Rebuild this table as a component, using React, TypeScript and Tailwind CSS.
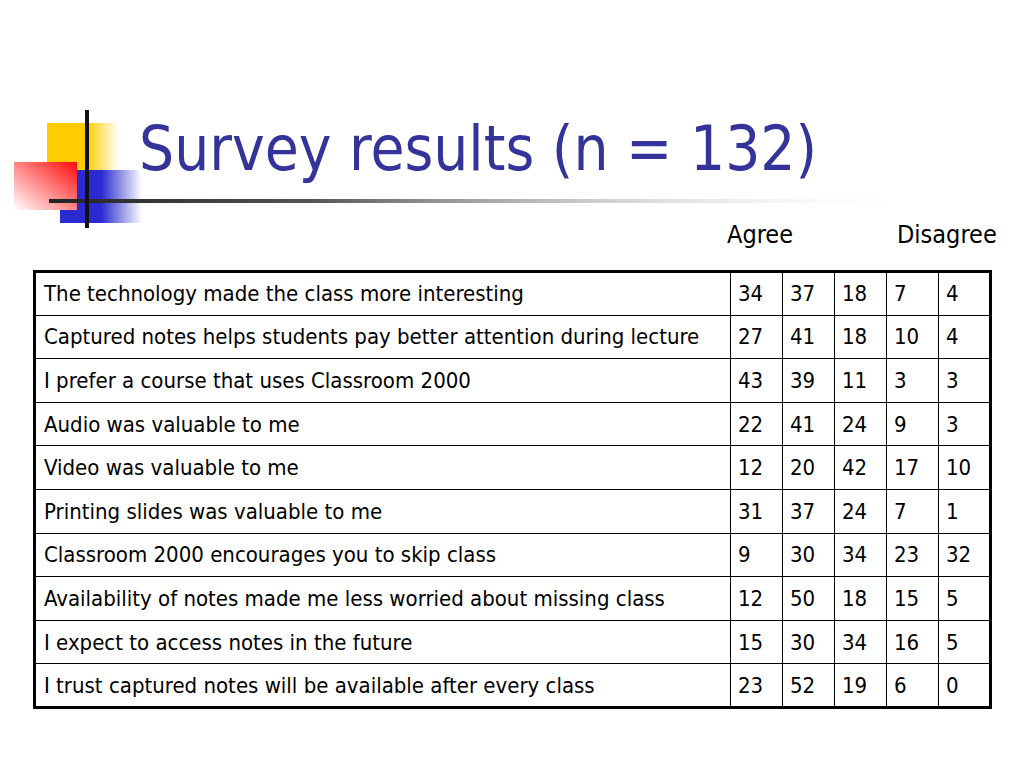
import React from "react";

const rows: [string, number[]][] = [
  ["The technology made the class more interesting", [34, 37, 18, 7, 4]],
  ["Captured notes helps students pay better attention during lecture", [27, 41, 18, 10, 4]],
  ["I prefer a course that uses Classroom 2000", [43, 39, 11, 3, 3]],
  ["Audio was valuable to me", [22, 41, 24, 9, 3]],
  ["Video was valuable to me", [12, 20, 42, 17, 10]],
  ["Printing slides was valuable to me", [31, 37, 24, 7, 1]],
  ["Classroom 2000 encourages you to skip class", [9, 30, 34, 23, 32]],
  ["Availability of notes made me less worried about missing class", [12, 50, 18, 15, 5]],
  ["I expect to access notes in the future", [15, 30, 34, 16, 5]],
  ["I trust captured notes will be available after every class", [23, 52, 19, 6, 0]],
];

// decorative squares + rule behind the title
const Logo = () => (
  <svg width="1024" height="240" className="absolute left-0 top-0" viewBox="0 0 1024 240">
    <defs>
      <linearGradient id="yel" x1="0" x2="1" y1="0" y2="0">
        <stop offset="0.55" stopColor="#ffcc00" />
        <stop offset="1" stopColor="#ffffff" />
      </linearGradient>
      <linearGradient id="blu" x1="0" x2="1" y1="0" y2="0">
        <stop offset="0.5" stopColor="#2a2ad0" />
        <stop offset="1" stopColor="#ffffff" />
      </linearGradient>
      <linearGradient id="red" x1="1" x2="0" y1="0" y2="1">
        <stop offset="0" stopColor="#ff0a0a" />
        <stop offset="1" stopColor="#ffffff" />
      </linearGradient>
      <linearGradient id="line" x1="0" x2="1" y1="0" y2="0">
        <stop offset="0" stopColor="#222" />
        <stop offset="0.3" stopColor="#555" />
        <stop offset="1" stopColor="#fff" stopOpacity="0" />
      </linearGradient>
    </defs>
    <rect x="47" y="123" width="72" height="62" fill="url(#yel)" />
    <rect x="60" y="170" width="82" height="53" fill="url(#blu)" />
    <rect x="14" y="162" width="63" height="48" fill="url(#red)" />
    <rect x="49" y="199" width="880" height="4" fill="url(#line)" />
    <rect x="85" y="110" width="4" height="118" fill="#111" />
  </svg>
);

export default function App() {
  return (
    <div
      className="relative w-[1024px] h-[768px] bg-white overflow-hidden"
      style={{ fontFamily: "'DejaVu Sans Condensed', Tahoma, 'DejaVu Sans', sans-serif" }}
    >
      <Logo />
      <div className="relative flex flex-col pt-[112px] pl-[33px]">
        <h1 className="ml-[106px] text-[61.5px] leading-[74px] text-[#333399]">Survey results (n = 132)</h1>

        {/* scale labels */}
        <div className="flex mt-[35px] h-[38px] text-[25px] leading-[28px] text-black">
          <span className="ml-[694px]">Agree</span>
          <span className="ml-[104px]">Disagree</span>
        </div>

        <table className="mt-[11px] border-collapse border-[3px] border-black text-[22px] text-black w-[959px]">
          <tbody>
            {rows.map(([label, nums]) => (
              <tr key={label} className="h-[43.6px]">
                <td className="border border-black pl-[8px] w-[696px] whitespace-nowrap">{label}</td>
                {nums.map((n, i) => (
                  <td key={i} className="border border-black pl-[7px] w-[52px]">
                    {n}
                  </td>
                ))}
              </tr>
            ))}
          </tbody>
        </table>
      </div>
    </div>
  );
}
